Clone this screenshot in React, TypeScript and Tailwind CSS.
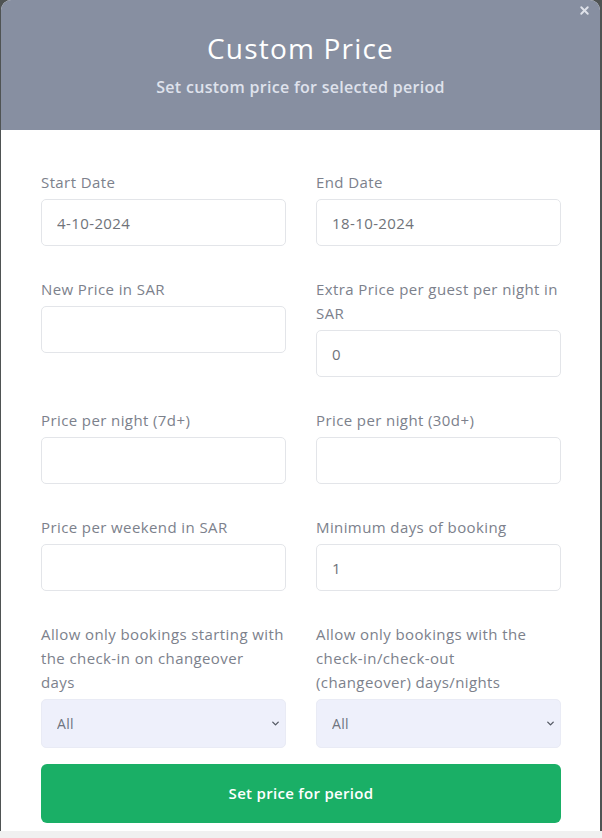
import { ChevronDown, X } from "lucide-react";

const font = { fontFamily: '"Open Sans", "Liberation Sans", sans-serif' };

type Field = {
  label: string;
  value?: string;
  select?: boolean;
};

const rows: Field[][] = [
  [
    { label: "Start Date", value: "4-10-2024" },
    { label: "End Date", value: "18-10-2024" },
  ],
  [
    { label: "New Price in SAR", value: "" },
    { label: "Extra Price per guest per night in SAR", value: "0" },
  ],
  [
    { label: "Price per night (7d+)", value: "" },
    { label: "Price per night (30d+)", value: "" },
  ],
  [
    { label: "Price per weekend in SAR", value: "" },
    { label: "Minimum days of booking", value: "1" },
  ],
  [
    {
      label: "Allow only bookings starting with the check-in on changeover\ndays",
      select: true,
    },
    {
      label: "Allow only bookings with the check-in/check-out\n(changeover) days/nights",
      select: true,
    },
  ],
];

const FieldBox = ({ field }: { field: Field }) => (
  <div className="flex flex-col">
    <label className="text-[15px] leading-6 tracking-[0.4px] text-[#7c818c] mb-[5px] whitespace-pre-line">
      {field.label}
    </label>
    {field.select ? (
      <div className="relative">
        <select
          defaultValue="All"
          className="appearance-none w-full h-[49px] rounded-[5px] bg-[#eef0fb] border border-[#e9ebf5] px-[15px] text-[14px] tracking-[0.3px] text-[#6f7480] outline-none"
          style={font}
        >
          <option>All</option>
        </select>
        <ChevronDown
          className="absolute right-[5px] top-[19px] w-[11px] h-[11px] text-[#555a64] pointer-events-none"
          strokeWidth={3}
        />
      </div>
    ) : (
      <input
        defaultValue={field.value}
        className="w-full h-[47px] rounded-[5px] border border-[#e3e5e9] bg-white px-[15px] text-[15px] tracking-[0.4px] text-[#70737a] outline-none"
        style={font}
      />
    )}
  </div>
);

export default function App() {
  return (
    <div className="w-[602px] h-[838px] bg-[#f0f0f0] overflow-hidden" style={font}>
      <div className="h-[831px] bg-[#4f5353] pl-[1px] pr-[2px]">
        <div className="h-full bg-white rounded-t-[10px] overflow-hidden flex flex-col">
          <div className="relative h-[130px] shrink-0 bg-[#878fa1] flex flex-col items-center pt-[30px]">
            <button className="absolute top-[4px] right-[9px] text-[#dfe2ea]">
              <X className="w-[13px] h-[13px]" strokeWidth={3.5} />
            </button>
            <h2 className="text-[28px] leading-9 tracking-[1.2px] text-white">Custom Price</h2>
            <p className="mt-[9px] text-[16px] leading-6 tracking-[0.3px] font-semibold text-[#dfe2ec]">
              Set custom price for selected period
            </p>
          </div>
          <div className="pt-[40px] pl-[40px] pr-[39px] flex flex-col">
            <div className="flex flex-col gap-[31px]">
              {rows.map((row, i) => (
                <div key={i} className="grid grid-cols-2 gap-x-[30px]">
                  {row.map((f) => (
                    <FieldBox key={f.label} field={f} />
                  ))}
                </div>
              ))}
            </div>
            <button className="mt-[16px] h-[59px] w-full rounded-[6px] bg-[#1aaf66] text-white text-[15px] tracking-[0.3px] font-semibold">
              Set price for period
            </button>
          </div>
        </div>
      </div>
    </div>
  );
}
